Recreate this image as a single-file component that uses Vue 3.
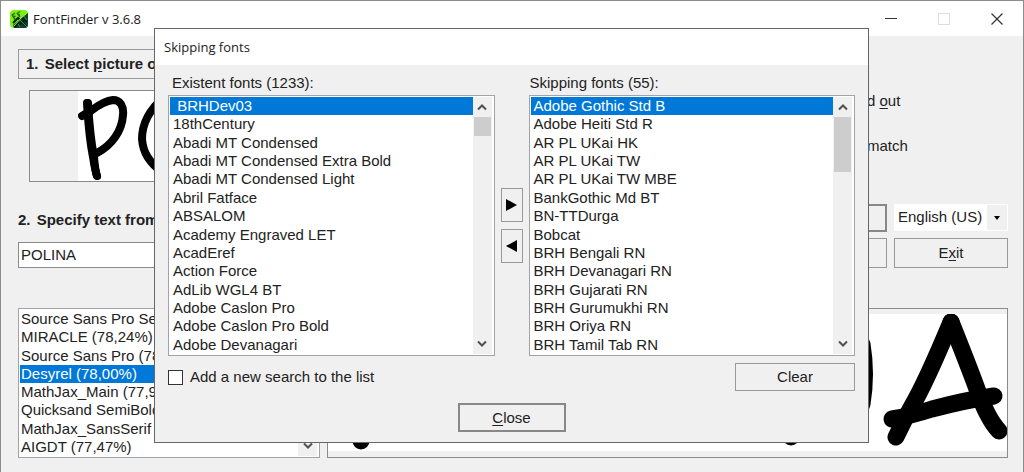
<script setup>
import { ref } from 'vue'

const existent = [
  '\u00a0BRHDev03', '18thCentury', 'Abadi MT Condensed', 'Abadi MT Condensed Extra Bold',
  'Abadi MT Condensed Light', 'Abril Fatface', 'ABSALOM', 'Academy Engraved LET', 'AcadEref',
  'Action Force', 'AdLib WGL4 BT', 'Adobe Caslon Pro', 'Adobe Caslon Pro Bold', 'Adobe Devanagari',
]
const skipping = [
  'Adobe Gothic Std B', 'Adobe Heiti Std R', 'AR PL UKai HK', 'AR PL UKai TW', 'AR PL UKai TW MBE',
  'BankGothic Md BT', 'BN-TTDurga', 'Bobcat', 'BRH Bengali RN', 'BRH Devanagari RN',
  'BRH Gujarati RN', 'BRH Gurumukhi RN', 'BRH Oriya RN', 'BRH Tamil Tab RN',
]
const results = [
  'Source Sans Pro Se', 'MIRACLE (78,24%)', 'Source Sans Pro (78', 'Desyrel (78,00%)',
  'MathJax_Main (77,9', 'Quicksand SemiBold', 'MathJax_SansSerif', 'AIGDT (77,47%)',
]
const existentIndex = ref(0)
const skippingIndex = ref(0)
const resultIndex = ref(3)
const text = ref('POLINA')
const language = ref('English (US)')
const addNew = ref(false)
</script>

<template>
  <div class="window">
    <header class="titlebar">
      <svg class="logo" width="18" height="18" viewBox="0 0 18 18" aria-hidden="true">
        <rect width="18" height="18" rx="4" fill="#7bf011" />
        <path d="M18 3v11a4 4 0 0 1-4 4H4L3 15z" fill="#143c2e" />
        <path d="M2 4.500l3 5M2 5l3-2M3.500 7l2-1M7 3l3 4M7 3.500l3-2M8 5.500l2-1" stroke="#2c6b10" stroke-width="1.500" fill="none" />
        <path d="M3 13L8 8l9 9M9 12l-4 5M12 8l5 4M10 15l4-5" stroke="#0c1d1a" stroke-width="2" fill="none" />
        <path d="M9 9l8 8M13 5l4 5M8 14l2 3" stroke="#17a35c" stroke-width="1" fill="none" />
        <path d="M4 16l9-10 5-4" stroke="#8df52a" stroke-width="1" fill="none" />
      </svg>
      <h1>FontFinder v 3.6.8</h1>
      <div class="controls">
        <button type="button" aria-label="Minimize">
          <svg width="12" height="12" viewBox="0 0 12 12"><path d="M0 5.500h12" stroke="#333" /></svg>
        </button>
        <button type="button" aria-label="Maximize" disabled>
          <svg width="12" height="12" viewBox="0 0 12 12"><rect x=".5" y=".5" width="11" height="11" fill="none" stroke="#ddd" /></svg>
        </button>
        <button type="button" aria-label="Exit window">
          <svg width="12" height="12" viewBox="0 0 12 12"><path d="M.5.5l11 11M11.500.5l-11 11" stroke="#333" stroke-width="1.200" /></svg>
        </button>
      </div>
    </header>

    <main class="content">
      <section class="top">
        <div class="source">
          <button type="button" class="step"><span>1.</span> Select <u>p</u>icture o</button>
          <div class="picture">
            <svg width="240" height="90" viewBox="78 91 240 90" aria-hidden="true">
              <rect x="78" y="91" width="240" height="90" fill="#fff" />
              <g fill="none" stroke="#000" stroke-width="8" stroke-linecap="round" stroke-linejoin="round">
                <path d="M87 103C88 120 90 142 93 157Q95 170 97 176" />
                <path d="M88 103C89 120 91 142 94 157Q95 170 97 176" />
                <path d="M82 116L92 110Q104 101 113 100C120 100 124 106 123 115C122 131 112 145 97 153" />
                <path d="M164 97C149 110 142 125 142 139C143 153 149 162 164 174" />
              </g>
            </svg>
          </div>
          <label class="step-label" for="sample"><span>2.</span> Specify text from</label>
          <input id="sample" v-model="text" type="text" class="field" />
        </div>
        <div class="side">
          <p class="note">d <u>o</u>ut</p>
          <p class="note">match</p>
          <div class="actions">
            <button type="button" class="btn strong" aria-label="Search"></button>
            <div class="combo">
              <select v-model="language" aria-label="Language"><option>English (US)</option></select>
              <span class="drop"><svg width="6" height="4" viewBox="0 0 6 4"><path d="M0 0h6L3 4z" /></svg></span>
            </div>
            <button type="button" class="btn" aria-label="Options"></button>
            <button type="button" class="btn"><span>E<u>x</u>it</span></button>
          </div>
        </div>
      </section>

      <section class="bottom">
        <div class="listbox results">
          <ul role="listbox" aria-label="Results">
            <li v-for="(name, i) in results" :key="name" role="option" :aria-selected="i === resultIndex" @click="resultIndex = i">{{ name }}</li>
          </ul>
          <div class="scroll">
            <svg width="10" height="7" viewBox="0 0 10 7"><path d="M1 5.500l4-4 4 4" /></svg>
            <svg width="10" height="7" viewBox="0 0 10 7"><path d="M1 1.500l4 4 4-4" /></svg>
          </div>
        </div>
        <div class="preview">
          <svg viewBox="328 314 679 137" preserveAspectRatio="xMaxYMid slice" aria-hidden="true">
            <rect x="328" y="314" width="679" height="137" fill="#fff" />
            <g fill="none" stroke="#000" stroke-width="17" stroke-linecap="round" stroke-linejoin="round">
              <path d="M951 322Q926 382 912 406Q904 420 896 437" />
              <path d="M951 322C959 342 969 367 977 389Q987 418 999 431" />
              <path d="M892 419Q910 416 932 409Q966 400 994 396" />
              <path d="M862 344Q867 374 862 404" />
              <path d="M361 420v21M791 420v17" />
              <path d="M479 433h6" />
            </g>
          </svg>
        </div>
      </section>
    </main>

    <div class="dialog" role="dialog" aria-labelledby="dialog-title">
      <h2 id="dialog-title">Skipping fonts</h2>
      <div class="dialog-body">
        <div class="lists">
          <div class="column">
            <h3 id="existent">Existent fonts (1233):</h3>
            <div class="listbox tall">
              <ul role="listbox" aria-labelledby="existent">
                <li v-for="(name, i) in existent" :key="name" role="option" :aria-selected="i === existentIndex" @click="existentIndex = i">{{ name }}</li>
              </ul>
              <div class="scroll">
                <svg width="10" height="7" viewBox="0 0 10 7"><path d="M1 5.500l4-4 4 4" /></svg>
                <span class="thumb short"></span>
                <svg width="10" height="7" viewBox="0 0 10 7"><path d="M1 1.500l4 4 4-4" /></svg>
              </div>
            </div>
          </div>
          <div class="movers">
            <button type="button" class="btn" aria-label="Skip font"><svg width="11" height="12" viewBox="0 0 11 12"><path d="M0 0v12l11-6z" /></svg></button>
            <button type="button" class="btn" aria-label="Restore font"><svg width="11" height="12" viewBox="0 0 11 12"><path d="M11 0v12L0 6z" /></svg></button>
          </div>
          <div class="column">
            <h3 id="skipping">Skipping fonts (55):</h3>
            <div class="listbox tall">
              <ul role="listbox" aria-labelledby="skipping">
                <li v-for="(name, i) in skipping" :key="name" role="option" :aria-selected="i === skippingIndex" @click="skippingIndex = i">{{ name }}</li>
              </ul>
              <div class="scroll">
                <svg width="10" height="7" viewBox="0 0 10 7"><path d="M1 5.500l4-4 4 4" /></svg>
                <span class="thumb long"></span>
                <svg width="10" height="7" viewBox="0 0 10 7"><path d="M1 1.500l4 4 4-4" /></svg>
              </div>
            </div>
          </div>
        </div>
        <div class="options">
          <label><input v-model="addNew" type="checkbox" />Add a new search to the list</label>
          <button type="button" class="btn clear">Clear</button>
        </div>
        <button type="button" class="btn strong close"><span><u>C</u>lose</span></button>
      </div>
    </div>
  </div>
</template>

<style>
body {
  margin: 0;
  background: #f0f0f0;
}
</style>

<style scoped>
* {
  box-sizing: border-box;
}
.window {
  position: relative;
  min-height: 100vh;
  border: 1px solid #8c8c8c;
  border-bottom: 0;
  overflow: hidden;
  background: #f0f0f0;
  color: #222;
  font: 15px/18px "Liberation Sans", Arial, sans-serif;
}
button, input, select {
  font: inherit;
  color: inherit;
}
h1, h2, h3, p, ul {
  margin: 0;
  padding: 0;
  font-weight: normal;
}
ul {
  list-style: none;
}
u {
  text-underline-offset: 2px;
}
.titlebar {
  display: flex;
  align-items: center;
  height: 35px;
  padding-left: 9px;
  background: #fff;
}
h1, h2 {
  font: 13px/18px "Open Sans", "Noto Sans", sans-serif;
}
h1 {
  margin-left: 5px;
}
.controls {
  display: flex;
  margin-left: auto;
}
.controls button {
  display: grid;
  place-items: center;
  width: 53px;
  height: 34px;
  padding: 0;
  border: 0;
  background: none;
}
.content {
  padding: 13px 15px 14px 17px;
}
.top {
  display: grid;
  grid-template-columns: 1fr 227px;
}
.source {
  display: flex;
  flex-direction: column;
}
.step {
  height: 30px;
  padding: 0 7px;
  border: 1px solid #999;
  background: none;
  font-weight: bold;
  text-align: left;
}
.step span, .step-label span {
  margin-right: 2px;
}
.picture {
  height: 92px;
  margin: 11px 0 0 11px;
  padding-left: 48px;
  border: 1px solid #8a8a8a;
}
.picture svg {
  display: block;
}
.step-label {
  margin: 29px 0 13px;
  font-weight: bold;
}
.field {
  height: 26px;
  padding: 0 2px 2px;
  border: 1px solid #8a8a8a;
  border-radius: 0;
  background: #fff;
}
.side {
  display: flex;
  flex-direction: column;
}
.note {
  margin: 43px 0 0 86px;
}
.note + .note {
  margin-top: 27px;
}
.actions {
  display: grid;
  grid-template-columns: 1fr 114px;
  grid-template-rows: 28px 30px;
  gap: 6px 7px;
  margin-top: auto;
}
.btn {
  display: grid;
  grid-auto-flow: column;
  place-content: center;
  padding: 0;
  border: 1px solid #999;
  border-radius: 0;
  background: #f0f0f0;
}
.btn.strong {
  border: 2px solid #888;
}
.combo {
  display: grid;
  grid-template-columns: 1fr 20px;
  align-self: start;
  height: 27px;
  padding: 1px;
  background: #fff;
}
.combo select {
  min-width: 0;
  padding: 0 0 2px 3px;
  border: 0;
  background: #fff;
  appearance: none;
}
.drop {
  display: grid;
  place-items: center;
  background: #f0f0f0;
}
.bottom {
  display: grid;
  grid-template-columns: 302px 1fr;
  gap: 7px;
  margin-top: 40px;
}
.listbox {
  display: flex;
  height: 150px;
  padding: 1px 2px 1px 1px;
  border: 1px solid #a0a3aa;
  background: #fff;
}
.listbox ul {
  display: flex;
  flex: 1;
  flex-direction: column;
}
.listbox li {
  flex: 1;
  padding-left: 3px;
  white-space: nowrap;
}
.listbox.results li {
  padding-left: 1px;
}
.listbox li[aria-selected="true"] {
  background: #0078d7;
  color: #fff;
}
.scroll {
  display: flex;
  flex-direction: column;
  align-items: center;
  width: 19px;
  padding: 7px 0;
  background: #f0f0f0;
}
.scroll svg:last-child {
  margin-top: auto;
}
.scroll path {
  fill: none;
  stroke: #505050;
  stroke-width: 2;
}
.thumb {
  width: 17px;
  margin-top: 6px;
  background: #cdcdcd;
}
.thumb.short {
  height: 19px;
}
.thumb.long {
  height: 55px;
}
.preview {
  height: 150px;
  padding: 5px 0;
  border: 1px solid #8a8a8a;
}
.preview svg {
  display: block;
  width: 100%;
  height: 137px;
}
.dialog {
  position: absolute;
  top: 27px;
  left: 153px;
  right: 154px;
  border: 1px solid #666;
  background: #f0f0f0;
}
h2 {
  padding: 9px;
  background: #fff;
}
.dialog-body {
  display: flex;
  flex-direction: column;
  padding: 9px 13px 10px;
}
.lists {
  display: grid;
  grid-template-columns: 1fr 34px 1fr;
}
h3 {
  margin-bottom: 3px;
  padding-left: 4px;
  font-size: 15px;
}
.column:last-child h3 {
  padding-left: 1px;
}
.listbox.tall {
  height: 261px;
}
.movers {
  display: flex;
  flex-direction: column;
  align-items: center;
  gap: 7px;
  padding-top: 114px;
}
.movers .btn {
  width: 22px;
  height: 34px;
}
.options {
  display: flex;
  justify-content: space-between;
  margin-top: 7px;
}
.options label {
  display: flex;
  align-items: center;
  gap: 7px;
}
.options input {
  width: 15px;
  height: 15px;
  margin: 0;
  border: 1px solid #333;
  background: #fff;
  appearance: none;
}
.options input:checked {
  background: #0078d7;
}
.clear {
  width: 120px;
  height: 28px;
}
.close {
  align-self: center;
  width: 108px;
  height: 29px;
  margin-top: 12px;
}
</style>
